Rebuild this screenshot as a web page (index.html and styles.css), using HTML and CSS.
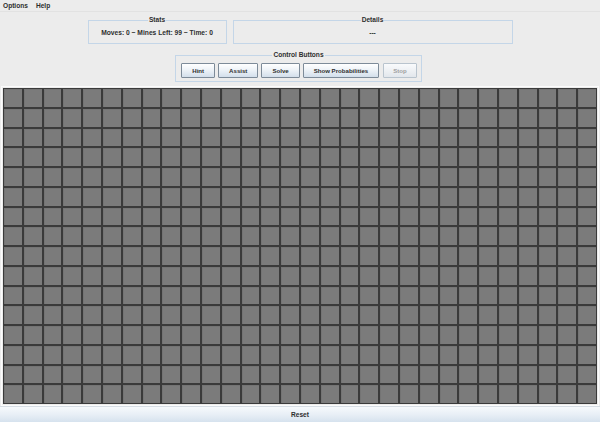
FILE: index.html
```html
<!DOCTYPE html>
<html>
<head>
<meta charset="utf-8">
<link rel="stylesheet" href="styles.css">
</head>
<body>
<div class="app">
  <nav class="menubar">
    <span class="menu">Options</span>
    <span class="menu">Help</span>
  </nav>
  <div class="top-row">
    <fieldset class="panel stats">
      <legend>Stats</legend>
      <div class="panel-text">Moves: 0 ~ Mines Left: 99 ~ Time: 0</div>
    </fieldset>
    <fieldset class="panel details">
      <legend>Details</legend>
      <div class="panel-text">---</div>
    </fieldset>
  </div>
  <div class="control-row">
    <fieldset class="panel controls">
      <legend>Control Buttons</legend>
      <div class="buttons">
        <button class="btn">Hint</button>
        <button class="btn">Assist</button>
        <button class="btn">Solve</button>
        <button class="btn">Show Probabilities</button>
        <button class="btn btn-stop" disabled>Stop</button>
      </div>
    </fieldset>
  </div>
  <div class="board-wrap">
    <div class="board" id="board"></div>
  </div>
  <button class="reset">Reset</button>
</div>
<script src="script.js"></script>
</body>
</html>
```
FILE: styles.css
```css
html, body {
  margin: 0;
  padding: 0;
}
body {
  width: 600px;
  height: 422px;
  background: #ececec;
  font-family: "Liberation Sans", Arial, sans-serif;
  font-weight: bold;
  color: #2e2e2e;
  overflow: hidden;
}
.app {
  display: flex;
  flex-direction: column;
  height: 422px;
}
.menubar {
  height: 12px;
  display: flex;
  align-items: center;
  gap: 8px;
  padding-left: 3px;
  font-size: 6.6px;
  border-bottom: 1px solid #e2e2e2;
  box-sizing: border-box;
}
.top-row {
  display: flex;
  justify-content: center;
  gap: 6px;
  margin-top: 4px;
}
.panel {
  margin: 0;
  padding: 0;
  border: 1px solid #c4d6e8;
  box-sizing: border-box;
  min-width: 0;
}
.panel legend {
  margin: 0 auto;
  padding: 0 1px;
  font-size: 6.6px;
  line-height: 8px;
  color: #2e2e2e;
}
.stats {
  width: 139px;
  height: 28px;
}
.details {
  width: 280px;
  height: 28px;
}
.panel-text {
  font-size: 6.7px;
  line-height: 8px;
  text-align: center;
  padding-top: 5px;
}
.control-row {
  display: flex;
  justify-content: center;
  margin-top: 7px;
}
.controls {
  height: 31px;
  margin-left: -3px;
}
.buttons {
  display: flex;
  gap: 3px;
  padding: 4px 4px 0 5px;
}
.btn {
  flex-shrink: 0;
  white-space: nowrap;
  height: 15px;
  padding: 0 10px;
  font-family: inherit;
  font-weight: bold;
  font-size: 6.1px;
  color: #2e2e2e;
  border: 1px solid #7d8b99;
  border-radius: 1px;
  background: linear-gradient(#ffffff 0%, #eef3f8 45%, #d3dfeb 100%);
}
.btn-stop {
  margin-left: 1px;
  padding: 0 9px;
}
.btn:disabled {
  color: #a0a0a0;
  border-color: #b9c4ce;
  background: linear-gradient(#f9fafc 0%, #eef1f4 50%, #e2e7ec 100%);
}
.board-wrap {
  flex: 1;
  margin: 4px 1px 0;
  border: 1px solid #fbfbfb;
  padding: 1px;
  display: flex;
}
.board {
  flex: 1;
  display: grid;
  grid-template-columns: repeat(30, 1fr);
  grid-template-rows: repeat(16, 1fr);
  background: #7a7a7a;
}
.cell {
  background: #7b7b7b;
  border: 1px solid #3a3a3a;
  box-shadow: inset 1px 1px 0 #747474;
}
.reset {
  height: 16px;
  margin: 0;
  border: none;
  border-top: 1px solid #d6dde4;
  font-family: inherit;
  font-weight: bold;
  font-size: 6.6px;
  color: #2e2e2e;
  background: linear-gradient(#f6f9fc 0%, #e8eff6 50%, #d6e2ee 100%);
  padding: 0;
}
```
FILE: script.js
```js
var board = document.getElementById('board');
for (var i = 0; i < 30 * 16; i++) {
  var c = document.createElement('div');
  c.className = 'cell';
  board.appendChild(c);
}
```
